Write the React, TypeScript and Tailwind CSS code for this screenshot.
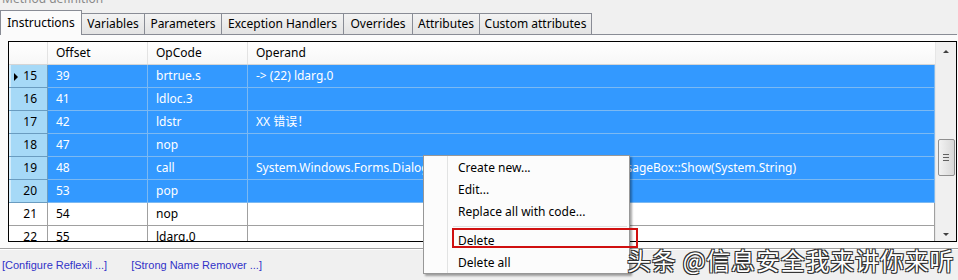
const tabs = [
  { label: "Variables", w: "w-[64px]" },
  { label: "Parameters", w: "w-[78px]" },
  { label: "Exception Handlers", w: "w-[123px]" },
  { label: "Overrides", w: "w-[70px]" },
  { label: "Attributes", w: "w-[68px]" },
  { label: "Custom attributes", w: "w-[113px]" },
];

const rows = [
  { n: 15, off: "39", op: "brtrue.s", arg: "-> (22) ldarg.0", sel: true, mark: true },
  { n: 16, off: "41", op: "ldloc.3", arg: "", sel: true },
  { n: 17, off: "42", op: "ldstr", arg: "XX 错误！", sel: true },
  { n: 18, off: "47", op: "nop", arg: "", sel: true },
  {
    n: 19,
    off: "48",
    op: "call",
    arg: "System.Windows.Forms.DialogResult System.Windows.Forms.MessageBox::Show(System.String)",
    sel: true,
  },
  { n: 20, off: "53", op: "pop", arg: "", sel: true },
  { n: 21, off: "54", op: "nop", arg: "", sel: false },
  { n: 22, off: "55", op: "ldarg.0", arg: "", sel: false },
];

const menu = ["Create new...", "Edit...", "Replace all with code..."];

function Row({ r }: { r: (typeof rows)[number] }) {
  const cell = r.sel
    ? "bg-[#3399ff] text-white border-r border-b border-[#7cb9f2]"
    : "bg-white text-black border-r border-b border-[#a0a0a0]";
  return (
    <div className="flex h-[23px] shrink-0">
      <div
        className={`w-[39px] shrink-0 flex items-center justify-end pr-[10px] border-r border-b relative ${
          r.sel
            ? "bg-[#a6d9f7] border-[#6a9cc0] shadow-[inset_2px_0_0_#d3ecfb]"
            : "bg-white border-[#a0a0a0]"
        }`}
      >
        {r.mark && (
          <span className="absolute left-[5px] top-[8px] w-0 h-0 border-y-[4px] border-y-transparent border-l-[4px] border-l-black" />
        )}
        {r.n}
      </div>
      <div className={`w-[100px] shrink-0 pl-[8px] flex items-center ${cell}`}>{r.off}</div>
      <div className={`w-[100px] shrink-0 pl-[8px] flex items-center ${cell}`}>{r.op}</div>
      <div className={`flex-1 pl-[8px] flex items-center whitespace-nowrap overflow-hidden ${cell}`}>
        {r.arg}
      </div>
    </div>
  );
}

export default function App() {
  return (
    <div
      className="w-[958px] h-[280px] bg-[#f0f0f0] relative overflow-hidden text-[12px] text-black"
      style={{ fontFamily: '"Noto Sans", "Noto Sans CJK SC", sans-serif' }}
    >
      {/* cut-off group caption */}
      <div className="h-[10px] overflow-hidden">
        <div className="-mt-[8px] pl-[2px] leading-[14px] text-[#8a8a8a]">Method definition</div>
      </div>

      {/* tab strip */}
      <div className="flex items-end h-[25px]">
        <div className="w-[82px] h-[25px] bg-[#fbfbfb] border border-b-0 border-[#898c95] flex items-center justify-center shrink-0 z-10">
          Instructions
        </div>
        {tabs.map((t) => (
          <div
            key={t.label}
            className={`${t.w} h-[22px] shrink-0 -ml-px border border-[#898c95] bg-gradient-to-b from-[#f3f3f3] to-[#e3e3e3] flex items-center justify-center whitespace-nowrap`}
          >
            {t.label}
          </div>
        ))}
        <div className="flex-1 h-[22px] border-b border-[#898c95] mr-[1px]" />
      </div>

      {/* tab page */}
      <div className="bg-[#fbfbfb] pt-[6px] pb-[6px]">
        <div className="ml-[8px] mr-[1px] h-[201px] border border-black flex bg-white">
          <div className="flex-1 flex flex-col overflow-hidden">
            <div className="flex h-[23px] shrink-0 bg-gradient-to-b from-white to-[#f7f7f7] border-b border-[#d5d5d5]">
              <div className="w-[39px] shrink-0 border-r border-[#e3e3e3]" />
              <div className="w-[100px] shrink-0 pl-[8px] flex items-center border-r border-[#e3e3e3]">Offset</div>
              <div className="w-[100px] shrink-0 pl-[8px] flex items-center border-r border-[#e3e3e3]">OpCode</div>
              <div className="flex-1 pl-[8px] flex items-center">Operand</div>
            </div>
            {rows.map((r) => (
              <Row key={r.n} r={r} />
            ))}
          </div>

          {/* scrollbar */}
          <div className="w-[21px] shrink-0 bg-[#f0f0f0] border-l border-[#e6e6e6] flex flex-col items-center">
            <div className="h-[16px] flex items-center justify-center mt-[1px]">
              <span className="w-0 h-0 border-x-[3px] border-x-transparent border-b-[3px] border-b-[#404040]" />
            </div>
            <div className="h-[80px]" />
            <div className="w-[17px] h-[37px] rounded-[2px] border border-[#8f8f8f] bg-gradient-to-r from-[#f2f2f2] to-[#d8d8d8] flex flex-col items-center justify-center gap-[2px]">
              <span className="w-[6px] h-px bg-[#606060]" />
              <span className="w-[6px] h-px bg-[#606060]" />
              <span className="w-[6px] h-px bg-[#606060]" />
            </div>
            <div className="flex-1" />
            <div className="h-[14px] flex items-center justify-center">
              <span className="w-0 h-0 border-x-[3px] border-x-transparent border-t-[3px] border-t-[#404040]" />
            </div>
          </div>
        </div>
      </div>

      {/* status bar */}
      <div className="border-t border-[#a0a0a0] shadow-[inset_0_1px_0_#ffffff] flex items-center gap-[24px] pl-[2px] pt-[8px]">
        <span className="text-[11px] text-[#3232c8]" style={{ fontFamily: '"Liberation Sans", sans-serif' }}>
          [Configure Reflexil ...]
        </span>
        <span className="text-[11px] text-[#3232c8]" style={{ fontFamily: '"Liberation Sans", sans-serif' }}>
          [Strong Name Remover ...]
        </span>
      </div>

      {/* context menu */}
      <div className="absolute left-[423px] top-[155px] w-[207px] bg-[#fcfcfc] border border-[#979797] shadow-[2px_2px_2px_rgba(0,0,0,0.35)] pt-[1px]">
        <div className="absolute left-[23px] top-0 bottom-0 w-px bg-[#e2e3e3]" />
        {menu.map((m) => (
          <div key={m} className="h-[22px] pl-[34px] flex items-center">
            {m}
          </div>
        ))}
        <div className="h-[7px] flex items-center pl-[29px] pr-[2px]">
          <div className="h-px w-full bg-[#e0e0e0]" />
        </div>
        <div className="h-[22px] pl-[34px] flex items-center">Delete</div>
        <div className="h-[21px] pl-[34px] flex items-center">Delete all</div>
      </div>

      {/* highlight box */}
      <div className="absolute left-[452px] top-[228px] w-[186px] h-[20px] border-2 border-[#d01010]" />

      {/* watermark */}
      <div
        className="absolute left-[627px] top-[245px] text-[24px] tracking-[0.8px] leading-[30px] text-white whitespace-nowrap [text-shadow:0_0_1px_#222,1px_1px_0_#333,-1px_-1px_0_#333,1px_-1px_0_#333,-1px_1px_0_#333]"
        style={{ fontFamily: '"Noto Sans CJK SC", sans-serif' }}
      >
        头条 @信息安全我来讲你来听
      </div>
    </div>
  );
}
